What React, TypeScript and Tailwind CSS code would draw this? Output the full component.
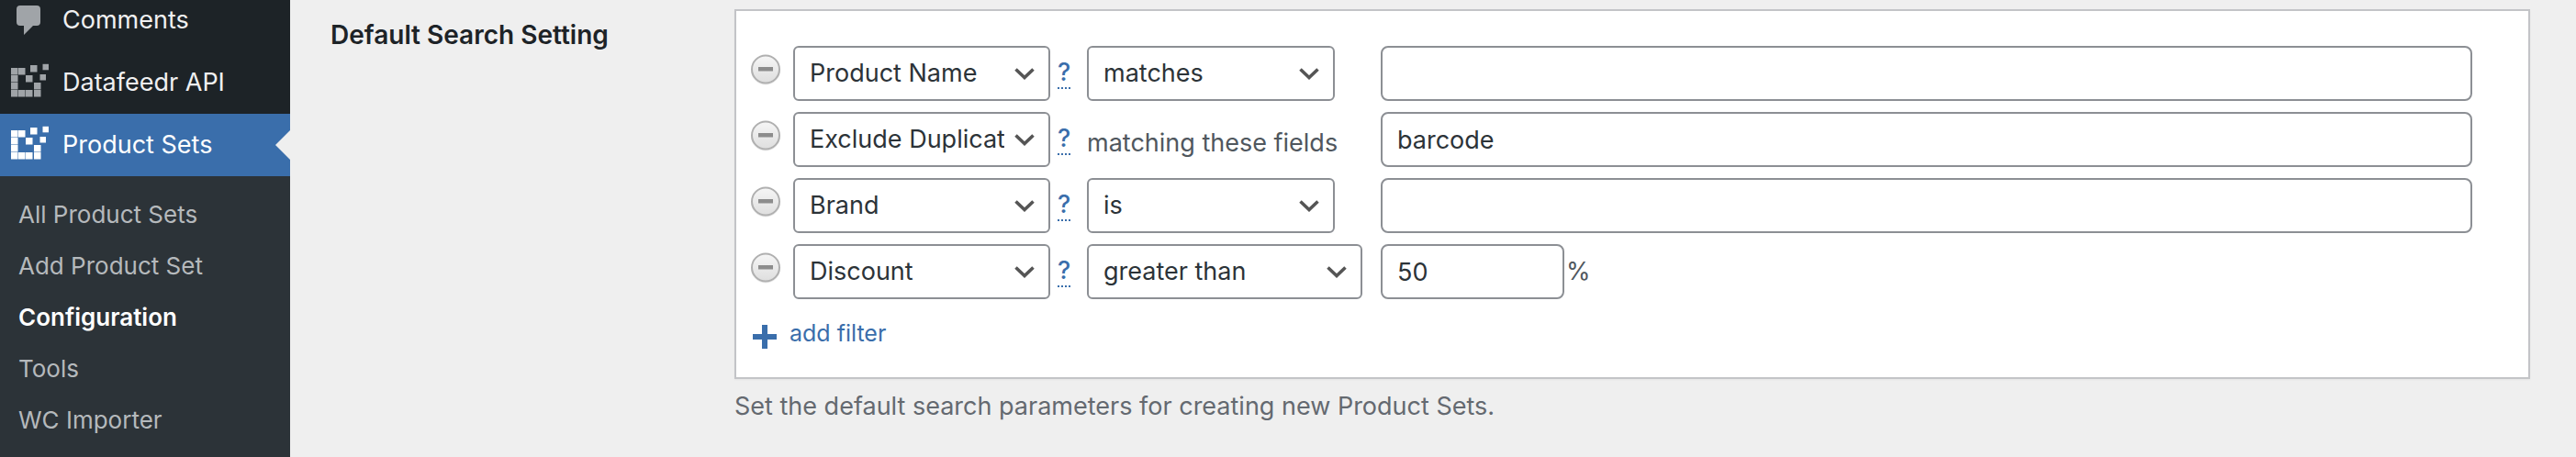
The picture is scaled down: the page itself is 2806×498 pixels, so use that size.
import type { InputHTMLAttributes, SelectHTMLAttributes } from "react";
import { clsx } from "clsx";

const FEEDR_SQUARES = [
  [1, 5, 7],
  [9, 5, 7],
  [1, 13, 7],
  [17, 13, 7],
  [1, 21, 7],
  [26, 21, 7],
  [1, 29, 7],
  [9, 29, 7],
  [17, 29, 7],
  [26, 29, 7],
  [22, 2, 7],
  [35.5, 0.8, 6],
  [32.5, 12, 6],
];

const FeedrIcon = () => (
  <svg viewBox="0 0 42 42" className="size-[42px]" fill="currentColor" aria-hidden="true">
    {FEEDR_SQUARES.map(([x, y, size]) => (
      <rect key={`${x}-${y}`} x={x} y={y} width={size + 0.5} height={size + 0.5} />
    ))}
  </svg>
);

const CommentIcon = () => (
  <svg viewBox="0 0 28 32" className="h-8 w-7" fill="currentColor" aria-hidden="true">
    <path d="M4 0h18a4 4 0 0 1 4 4v14a4 4 0 0 1-4 4h-4L8 32V22H4a4 4 0 0 1-4-4V4a4 4 0 0 1 4-4z" />
  </svg>
);

const MinusIcon = () => (
  <svg viewBox="0 0 34 34" className="size-[34px]" aria-hidden="true">
    <defs>
      <linearGradient id="minus-fill" x1="0" y1="0" x2="0" y2="1">
        <stop offset="0" stopColor="#f6f6f6" />
        <stop offset="1" stopColor="#dedede" />
      </linearGradient>
    </defs>
    <circle cx="17" cy="17.5" r="16" fill="#ececec" />
    <circle cx="17" cy="16.5" r="15" fill="url(#minus-fill)" stroke="#b0b0b0" strokeWidth="2" />
    <rect x="9" y="14" width="16" height="4.5" fill="#8c8c8c" />
  </svg>
);

const PlusIcon = () => (
  <svg viewBox="0 0 26 26" className="size-[26px]" fill="currentColor" aria-hidden="true">
    <path d="M10 0h6v10h10v6H16v10h-6V16H0v-6h10z" />
  </svg>
);

const menu = [
  { label: "Comments", icon: <CommentIcon /> },
  { label: "Datafeedr API", icon: <FeedrIcon /> },
  { label: "Product Sets", icon: <FeedrIcon />, current: true },
];

const submenu = ["All Product Sets", "Add Product Set", "Configuration", "Tools", "WC Importer"];

const Sidebar = () => (
  <nav className="w-[316px] shrink-0 overflow-hidden bg-[#2c3338]">
    <ul className="-mt-3 bg-[#1d2327]">
      {menu.map(({ label, icon, current }) => (
        <li key={label}>
          <a
            href="#"
            className={clsx(
              "relative flex h-[68px] items-center gap-1",
              current ? "bg-[#3a6eab] text-white" : "text-[#f0f0f1]",
            )}
          >
            <span
              className={clsx("flex w-16 justify-center", current ? "text-white" : "text-[#a0a4a8]")}
            >
              {icon}
            </span>
            {label}
            {current && (
              <span className="absolute top-[18px] right-0 border-y-16 border-r-16 border-y-transparent border-r-[#efefef]" />
            )}
          </a>
        </li>
      ))}
    </ul>
    <ul className="pt-[14px] text-[26px]">
      {submenu.map((label) => (
        <li key={label}>
          <a
            href="#"
            className={clsx(
              "flex h-14 items-center px-5",
              label === "Configuration" ? "font-semibold text-white" : "text-[#b5b9bc]",
            )}
          >
            {label}
          </a>
        </li>
      ))}
    </ul>
  </nav>
);

const Select = ({
  options,
  className,
  ...props
}: SelectHTMLAttributes<HTMLSelectElement> & { options: string[] }) => (
  <div className={clsx("relative", className)}>
    <select
      className="h-[60px] w-full appearance-none rounded-md border-2 border-[#8c8f94] bg-white pr-12 pl-4 text-[#2c3338]"
      {...props}
    >
      {options.map((option) => (
        <option key={option}>{option}</option>
      ))}
    </select>
    <svg
      viewBox="0 0 22 14"
      className="pointer-events-none absolute top-6 right-[17px] h-[14px] w-[22px]"
      fill="none"
      stroke="#555"
      strokeWidth="3.6"
      aria-hidden="true"
    >
      <path d="M1.500 1.500 11 10.500l9.500-9" />
    </svg>
  </div>
);

const TextInput = ({ className, ...props }: InputHTMLAttributes<HTMLInputElement>) => (
  <input
    className={clsx(
      "h-[60px] rounded-lg border-2 border-[#8c8f94] bg-white px-4 text-[#2c3338]",
      className,
    )}
    {...props}
  />
);

const fields = ["Product Name", "Exclude Duplicates", "Brand", "Discount"];

const filters = [
  { field: "Product Name", operators: ["matches", "contains"], width: "w-[270px]", value: "" },
  { field: "Exclude Duplicates", value: "barcode" },
  { field: "Brand", operators: ["is", "is not"], width: "w-[270px]", value: "" },
  {
    field: "Discount",
    operators: ["greater than", "less than"],
    width: "w-[300px]",
    value: "50",
    unit: "%",
  },
];

const Filters = () => (
  <div className="flex flex-col gap-3">
    {filters.map(({ field, operators, width, value, unit }) => (
      <div
        key={field}
        className="grid grid-cols-[48px_288px_32px_320px_1fr] items-center text-[#50575e]"
      >
        <button type="button" aria-label={`Remove ${field} filter`} className="mb-2 w-9 pl-px">
          <MinusIcon />
        </button>
        <Select
          aria-label="Filter field"
          defaultValue={field}
          options={fields}
          className="w-[280px]"
        />
        <a
          href="#"
          aria-label={`Help for ${field}`}
          className="justify-self-start border-b-2 border-dotted border-[#3a6eab] font-medium leading-8 text-[#3a6eab]"
        >
          ?
        </a>
        {operators ? (
          <Select aria-label={`${field} operator`} options={operators} className={width} />
        ) : (
          <span className="pt-2">matching these fields</span>
        )}
        <div className="flex items-center gap-[2px]">
          <TextInput
            type="text"
            aria-label={`${field} value`}
            defaultValue={value}
            className={unit ? "w-[200px]" : "w-full"}
          />
          {unit}
        </div>
      </div>
    ))}
  </div>
);

export default function App() {
  return (
    <div className="flex min-h-screen bg-[#efefef] font-[Inter,sans-serif] text-[27px] leading-9">
      <Sidebar />
      <main className="flex min-w-0 flex-1 items-start pt-[10px] pr-[50px] pl-11">
        <h2 className="w-[440px] shrink-0 pt-[10px] text-[28px] font-semibold text-[#1d2327]">
          Default Search Setting
        </h2>
        <div className="min-w-0 flex-1">
          <section className="border-2 border-[#c3c4c7] bg-white pt-[38px] pr-[61px] pb-[30px] pl-[14px] shadow-xs">
            <Filters />
            <button
              type="button"
              className="mt-4 flex items-start gap-[14px] pl-1 text-[25px] text-[#3a6eab]"
            >
              <span className="pt-3">
                <PlusIcon />
              </span>
              <span className="pt-[3px]">add filter</span>
            </button>
          </section>
          <p className="pt-3 text-[#646970]">
            Set the default search parameters for creating new Product Sets.
          </p>
        </div>
      </main>
    </div>
  );
}
